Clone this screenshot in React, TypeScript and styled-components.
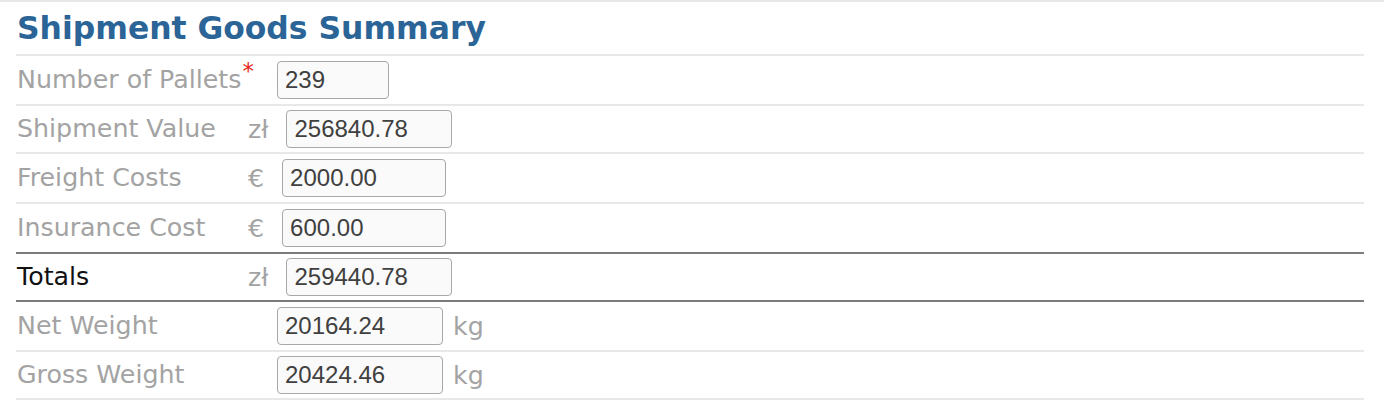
import React from 'react';
import styled, { createGlobalStyle } from 'styled-components';

const Global = createGlobalStyle`
  html, body { margin: 0; padding: 0; background: #ffffff; }
  body { font-family: "DejaVu Sans", Verdana, sans-serif; }
`;

const Page = styled.div`
  border-top: 2px solid #e8e8e8;
  padding: 0 20px 0 16px;
`;

const Title = styled.h2`
  margin: 0;
  height: 54px;
  box-sizing: border-box;
  padding: 11px 0 0 1px;
  font: bold 31.4px/1 "DejaVu Sans", Verdana, sans-serif;
  color: #2b6496;
  border-bottom: 2px solid #e8e8e8;
`;

const Row = styled.div<{ $h: number; $strong?: boolean }>`
  display: flex;
  align-items: center;
  height: ${(p) => p.$h}px;
  border-bottom: 2px solid ${(p) => (p.$strong ? '#7b7b7b' : '#e8e8e8')};
`;

const Label = styled.div<{ $dark?: boolean }>`
  width: 232px;
  min-width: 0;
  flex: none;
  white-space: nowrap;
  padding-left: 1px;
  box-sizing: border-box;
  font-size: 25.3px;
  line-height: 1.2;
  color: ${(p) => (p.$dark ? '#111111' : '#a3a3a3')};
`;

const Req = styled.span`
  color: #e2291b;
  font-size: 23px;
  line-height: 0;
  margin-left: 1px;
  position: relative;
  top: -9px;
`;

const Value = styled.div<{ $indent?: number }>`
  display: flex;
  align-items: center;
  padding-left: ${(p) => p.$indent ?? 0}px;
`;

const Unit = styled.span`
  font-size: 25.3px;
  color: #a3a3a3;
  margin-right: 18px;
`;

const Suffix = styled.span`
  font-size: 25.3px;
  color: #a3a3a3;
  margin-left: 10px;
`;

const Input = styled.input<{ $w: number }>`
  width: ${(p) => p.$w}px;
  height: 38px;
  box-sizing: border-box;
  border: 1px solid #a8a8a8;
  border-radius: 4px;
  background: #fafafa;
  padding: 0 7px;
  font: 24px "Liberation Sans", Arial, sans-serif;
  color: #404040;
  outline: none;
`;

type Line = {
  label: string;
  h: number;
  value: string;
  w: number;
  unit?: string;
  suffix?: string;
  indent?: number;
  required?: boolean;
  strong?: boolean;
  dark?: boolean;
};

const lines: Line[] = [
  { label: 'Number of Pallets', h: 48, value: '239', w: 112, indent: 29, required: true },
  { label: 'Shipment Value', h: 46, value: '256840.78', w: 166, unit: 'zł' },
  { label: 'Freight Costs', h: 48, value: '2000.00', w: 164, unit: '€' },
  { label: 'Insurance Cost', h: 48, value: '600.00', w: 164, unit: '€', strong: true },
  { label: 'Totals', h: 46, value: '259440.78', w: 166, unit: 'zł', strong: true, dark: true },
  { label: 'Net Weight', h: 48, value: '20164.24', w: 166, indent: 29, suffix: 'kg' },
  { label: 'Gross Weight', h: 46, value: '20424.46', w: 166, indent: 29, suffix: 'kg' },
];

export default function App() {
  return (
    <>
      <Global />
      <Page>
        <Title>Shipment Goods Summary</Title>
        {lines.map((l) => (
          <Row key={l.label} $h={l.h} $strong={l.strong}>
            <Label $dark={l.dark}>
              {l.label}
              {l.required && <Req>*</Req>}
            </Label>
            <Value $indent={l.indent}>
              {l.unit && <Unit>{l.unit}</Unit>}
              <Input $w={l.w} readOnly defaultValue={l.value} />
              {l.suffix && <Suffix>{l.suffix}</Suffix>}
            </Value>
          </Row>
        ))}
      </Page>
    </>
  );
}
